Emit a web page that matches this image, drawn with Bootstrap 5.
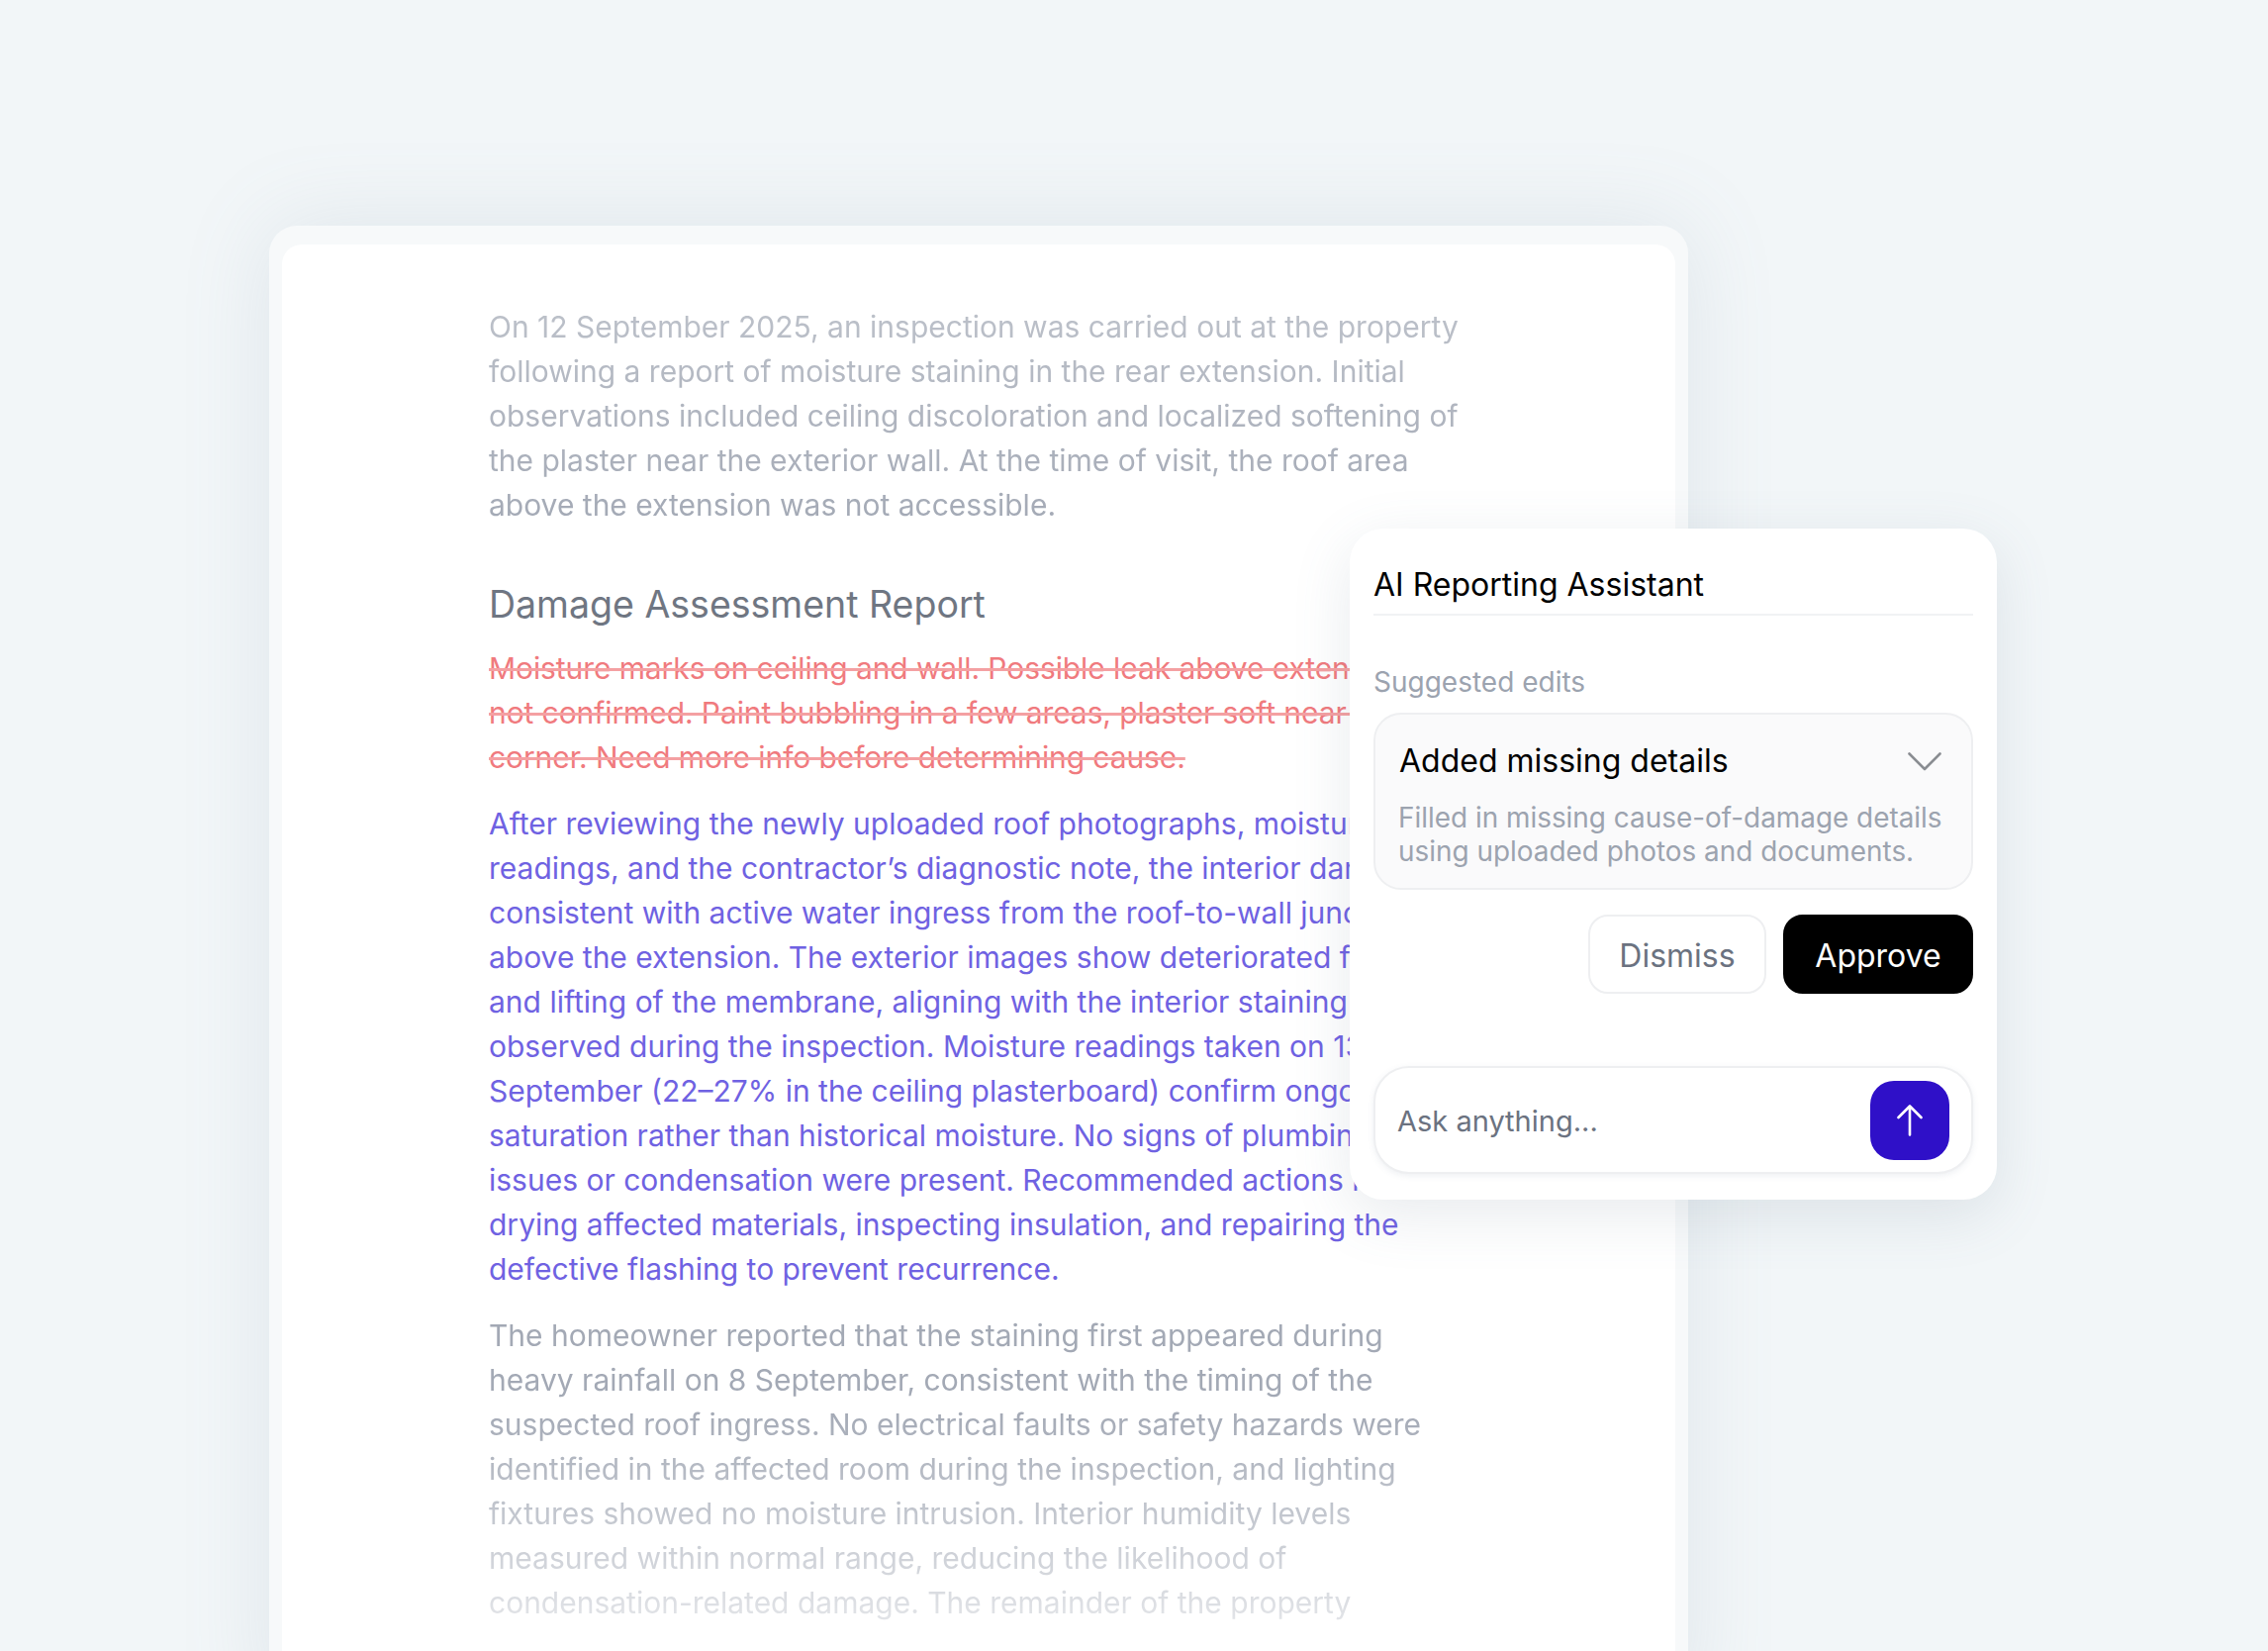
<!DOCTYPE html>
<html lang="en">
<head>
    <meta charset="UTF-8">
    <meta name="viewport" content="width=device-width, initial-scale=1.0">
    <title>AI Reporting Assistant</title>

    <link rel="stylesheet" href="https://cdn.jsdelivr.net/npm/bootstrap@5.3.0/dist/css/bootstrap.min.css">

    <style>
        html, body {
            height: 100%;
        }

        body {
            background-color: #f2f6f8;
            font-family: "Inter", "Liberation Sans", sans-serif;
            overflow: hidden;
        }

        .stage {
            position: relative;
            width: 2292px;
            height: 1668px;
            overflow: hidden;
            padding: 228px 586px 0 272px;
        }

        .doc-frame {
            height: 1500px;
            padding: 19px 13px 0;
            background-color: #f7f9fa;
            border-radius: 28px 28px 0 0;
            box-shadow: 0 0 90px rgba(120, 140, 160, .15);
        }

        .doc-sheet {
            height: 100%;
            padding: 61px 200px 0 209px;
            background-color: #fff;
            border-radius: 20px 20px 0 0;
        }

        .doc-text {
            font-size: 30px;
            line-height: 45px;
            white-space: nowrap;
            margin-bottom: 22px;
        }

        .doc-intro {
            color: #a3a9b5;
            margin-bottom: 54px;
            -webkit-mask-image: linear-gradient(to bottom, rgba(0, 0, 0, .72), #000);
            mask-image: linear-gradient(to bottom, rgba(0, 0, 0, .72), #000);
        }

        .doc-title {
            color: #6f7682;
            font-size: 37.5px;
            line-height: 48px;
            font-weight: 400;
            margin-bottom: 18px;
        }

        .doc-removed {
            color: #f07a7e;
            letter-spacing: -.09px;
            text-decoration: line-through;
            text-decoration-color: #f4a0a2;
        }

        .doc-added {
            color: #6f62e2;
        }

        .doc-outro {
            color: #a3a9b5;
            -webkit-mask-image: linear-gradient(to bottom, #000 30%, rgba(0, 0, 0, .3) 100%);
            mask-image: linear-gradient(to bottom, #000 30%, rgba(0, 0, 0, .3) 100%);
        }

        .ai-panel {
            position: absolute;
            left: 1364px;
            top: 534px;
            width: 654px;
            height: 678px;
            padding: 35px 24px 24px;
            background-color: #fff;
            border-radius: 34px;
            box-shadow: 0 16px 60px rgba(90, 110, 135, .14);
        }

        .ai-title {
            color: #000;
            font-size: 32px;
            line-height: 44px;
            font-weight: 400;
            padding-bottom: 7px;
            margin-bottom: 49px;
            border-bottom: 2px solid #f1f2f4;
        }

        .ai-label {
            color: #9ca3af;
            font-size: 28px;
            line-height: 36px;
            margin-bottom: 13px;
        }

        .edit-box {
            height: 179px;
            padding: 25px 30px 0 24px;
            background-color: #fafafb;
            border: 2px solid #eeeff1;
            border-radius: 28px;
        }

        .edit-title {
            color: #000;
            font-size: 32px;
            line-height: 44px;
        }

        .edit-desc {
            color: #9ca3af;
            font-size: 27.9px;
            line-height: 34px;
            margin-top: 18px;
            margin-left: -1px;
            white-space: nowrap;
        }

        .act-row {
            margin-top: 25px;
            column-gap: 17px;
        }

        .act-btn {
            height: 80px;
            padding-top: 9px;
            font-size: 32px;
            line-height: 1;
            border-radius: 20px;
        }

        .act-dismiss {
            width: 180px;
            color: #6b7280;
            background-color: #fff;
            border: 2px solid #eeeff1;
        }

        .act-approve {
            width: 192px;
            color: #fff;
            background-color: #000;
            border: 2px solid #000;
        }

        .ask-box {
            height: 109px;
            margin-top: 73px;
            padding: 0 22px 0 22px;
            background-color: #fff;
            border: 2px solid #eeeff1;
            border-radius: 36px;
            box-shadow: 0 2px 6px rgba(90, 110, 135, .1);
        }

        .ask-text {
            color: #6b7280;
            font-size: 29px;
            padding-top: 3px;
        }

        .send-btn {
            width: 80px;
            height: 80px;
            padding: 0;
            background-color: #2f10c8;
            border: 0;
            border-radius: 24px;
        }
    </style>
</head>
<body>
    <div class="stage">
        <div class="doc-frame">
            <div class="doc-sheet">
                <p class="doc-text doc-intro">
                    On 12 September 2025, an inspection was carried out at the property<br>
                    following a report of moisture staining in the rear extension. Initial<br>
                    observations included ceiling discoloration and localized softening of<br>
                    the plaster near the exterior wall. At the time of visit, the roof area<br>
                    above the extension was not accessible.
                </p>
                <h2 class="doc-title">Damage Assessment Report</h2>
                <p class="doc-text doc-removed">
                    Moisture marks on ceiling and wall. Possible leak above extension, roof<br>
                    not confirmed. Paint bubbling in a few areas, plaster soft near window<br>
                    corner. Need more info before determining cause.
                </p>
                <p class="doc-text doc-added">
                    After reviewing the newly uploaded roof photographs, moisture<br>
                    readings, and the contractor’s diagnostic note, the interior damage is<br>
                    consistent with active water ingress from the roof-to-wall junction<br>
                    above the extension. The exterior images show deteriorated flashing<br>
                    and lifting of the membrane, aligning with the interior staining<br>
                    observed during the inspection. Moisture readings taken on 13<br>
                    September (22–27% in the ceiling plasterboard) confirm ongoing<br>
                    saturation rather than historical moisture. No signs of plumbing<br>
                    issues or condensation were present. Recommended actions include<br>
                    drying affected materials, inspecting insulation, and repairing the<br>
                    defective flashing to prevent recurrence.
                </p>
                <p class="doc-text doc-outro">
                    The homeowner reported that the staining first appeared during<br>
                    heavy rainfall on 8 September, consistent with the timing of the<br>
                    suspected roof ingress. No electrical faults or safety hazards were<br>
                    identified in the affected room during the inspection, and lighting<br>
                    fixtures showed no moisture intrusion. Interior humidity levels<br>
                    measured within normal range, reducing the likelihood of<br>
                    condensation-related damage. The remainder of the property
                </p>
            </div>
        </div>

        <div class="ai-panel">
            <div class="ai-title">AI Reporting Assistant</div>
            <div class="ai-label">Suggested edits</div>
            <div class="edit-box">
                <div class="d-flex justify-content-between align-items-center">
                    <div class="edit-title">Added missing details</div>
                    <svg width="34" height="19" viewBox="0 0 34 19" fill="none" stroke="#8a8d92" stroke-width="2.6" stroke-linecap="round" stroke-linejoin="round" aria-hidden="true">
                        <path d="M1.5 1.5 L17 17 L32.500 1.5"/>
                    </svg>
                </div>
                <div class="edit-desc">Filled in missing cause-of-damage details<br>using uploaded photos and documents.</div>
            </div>
            <div class="act-row d-flex justify-content-end">
                <button type="button" class="btn act-btn act-dismiss">Dismiss</button>
                <button type="button" class="btn act-btn act-approve">Approve</button>
            </div>
            <div class="ask-box d-flex justify-content-between align-items-center">
                <span class="ask-text">Ask anything...</span>
                <button type="button" class="btn send-btn d-flex align-items-center justify-content-center" aria-label="Send">
                    <svg width="26" height="32" viewBox="0 0 26 32" fill="none" stroke="#fff" stroke-width="2.6" stroke-linecap="round" stroke-linejoin="round" aria-hidden="true">
                        <path d="M13 30.500 V1.500 M1.500 13 L13 1.500 L24.500 13"/>
                    </svg>
                </button>
            </div>
        </div>
    </div>

    <script src="https://cdn.jsdelivr.net/npm/bootstrap@5.3.0/dist/js/bootstrap.bundle.min.js"></script>
</body>
</html>
